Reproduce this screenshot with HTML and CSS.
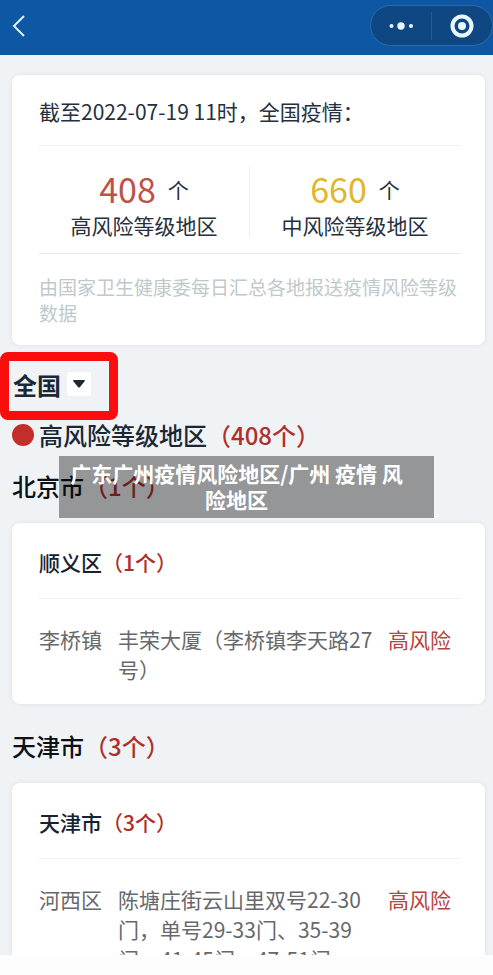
FILE: index.html
```html
<!DOCTYPE html>
<html lang="zh-CN">

<head>
    <meta charset="utf-8">
    <meta name="viewport" content="width=device-width, initial-scale=1.0">
    <title>疫情风险等级查询</title>
    <link rel="stylesheet" href="styles.css">
</head>

<body>

    <header class="topbar">
        <button class="back" aria-label="返回">
            <svg width="14" height="24" viewBox="0 0 14 24"><path d="M12 2 L2 12 L12 22" /></svg>
        </button>
        <div class="capsule">
            <button aria-label="更多">
                <svg width="24" height="10" viewBox="0 0 24 10">
                    <circle cx="2.500" cy="5" r="2" />
                    <circle cx="12" cy="5" r="3.700" />
                    <circle cx="22" cy="5" r="2" />
                </svg>
            </button>
            <button aria-label="关闭">
                <svg width="24" height="24" viewBox="0 0 24 24">
                    <circle class="ring" cx="12" cy="12" r="9.500" />
                    <circle cx="12" cy="12" r="4" />
                </svg>
            </button>
        </div>
    </header>

    <main>
        <section class="card">
            <h1 class="date">截至2022-07-19 11时，全国疫情：</h1>
            <div class="stats">
                <div class="stat">
                    <p class="count"><b class="high">408</b>个</p>
                    <p>高风险等级地区</p>
                </div>
                <div class="stat">
                    <p class="count"><b class="middle">660</b>个</p>
                    <p>中风险等级地区</p>
                </div>
            </div>
            <p class="note">由国家卫生健康委每日汇总各地报送疫情风险等级数据</p>
        </section>

        <div class="filter">
            <select class="region" aria-label="地区">
                <option>全国</option>
                <option>北京市</option>
                <option>天津市</option>
            </select>
            <span class="arrow">
                <svg width="12" height="8" viewBox="0 0 12 8"><path d="M1 0 H11 Q12.500 0 11.500 1.500 L7 7 Q6 8 5 7 L0.500 1.500 Q-0.500 0 1 0 Z" /></svg>
            </span>
        </div>

        <h2 class="level"><span class="dot"></span><span>高风险等级地区<span class="num">（408个）</span></span></h2>

        <section class="city">
            <h2 class="city-name">北京市<span class="num">（1个）</span></h2>
            <p class="caption">广东广州疫情风险地区/广州 疫情 风险地区</p>
            <div class="card">
                <h3 class="district">顺义区<span class="num">（1个）</span></h3>
                <table class="places">
                    <tr>
                        <th scope="row">李桥镇</th>
                        <td>丰荣大厦（李桥镇李天路27号）</td>
                        <td class="risk">高风险</td>
                    </tr>
                </table>
            </div>
        </section>

        <section class="city">
            <h2 class="city-name">天津市<span class="num">（3个）</span></h2>
            <div class="card">
                <h3 class="district">天津市<span class="num">（3个）</span></h3>
                <table class="places">
                    <tr>
                        <th scope="row">河西区</th>
                        <td>陈塘庄街云山里双号22-30门，单号29-33门、35-39门、41-45门、47-51门</td>
                        <td class="risk">高风险</td>
                    </tr>
                </table>
            </div>
        </section>
    </main>

    <footer class="bottom"></footer>

</body>

</html>
```
FILE: styles.css
```css
* {
    box-sizing: border-box;
}

body {
    margin: 0;
    height: 100vh;
    display: flex;
    flex-direction: column;
    overflow: hidden;
    background-color: #eff3f6;
    color: #25303c;
    font-family: "Noto Sans CJK SC", sans-serif;
    font-size: 21px;
}

h1,
h2,
h3,
p {
    margin: 0;
}

button {
    border: 0;
    padding: 0;
    background: none;
    cursor: pointer;
}

svg {
    display: block;
}

/* top */

.topbar {
    flex: none;
    display: flex;
    align-items: center;
    justify-content: space-between;
    height: 55px;
    padding: 0 0 4px 12px;
    background-color: #0d57a5;
}

.back path {
    fill: none;
    stroke: #dff2ff;
    stroke-width: 2;
}

.capsule {
    display: flex;
    align-items: center;
    width: 123px;
    height: 41px;
    border: 1px solid #2f6bab;
    border-radius: 21px;
    background-color: #0e4782;
}

.capsule button {
    flex: 1;
    display: flex;
    justify-content: center;
    align-items: center;
    height: 28px;
}

.capsule button + button {
    border-left: 1px solid #265a92;
}

.capsule svg {
    fill: #e9f8ff;
}

.capsule .ring {
    fill: none;
    stroke: #e9f8ff;
    stroke-width: 4;
}

main {
    flex: 1;
    min-height: 0;
    overflow: hidden;
    padding-top: 20px;
}

.card {
    margin: 0 8px 27px 12px;
    padding: 0 25px 0 27px;
    background-color: #fff;
    border-radius: 8px;
    box-shadow: 0 0 4px rgba(60, 70, 80, 0.1);
}

main > .card {
    margin-bottom: 7px;
}

.date {
    padding: 20px 0 18px;
    border-bottom: 1px solid #eff0f1;
    font-size: 21px;
    font-weight: 400;
    line-height: 32px;
}

.stats {
    display: flex;
    padding: 20px 0 15px;
    border-bottom: 1px solid #e6e8ea;
}

.stat {
    flex: 1;
    text-align: center;
    line-height: 26px;
}

.stat + .stat {
    border-left: 1px solid #eceef0;
}

.count {
    display: flex;
    justify-content: center;
    align-items: center;
    gap: 12px;
    height: 46px;
}

.count b {
    font-size: 34px;
    font-weight: 400;
}

.high {
    color: #bd5148;
}

.middle {
    color: #dfb62c;
}

.note {
    padding: 20px 0 19px;
    color: #c0c8cc;
    font-size: 19px;
    line-height: 26px;
}

/* region picker */

.filter {
    display: flex;
    align-items: center;
    width: 118px;
    height: 68px;
    padding: 0 0 4px 4px;
    border: 9px solid #f90d0d;
    border-radius: 8px;
}

.region {
    width: 78px;
    padding: 0;
    border: 0;
    appearance: none;
    background: none;
    color: #1b2733;
    font-family: inherit;
    font-size: 24px;
    font-weight: 700;
}

.arrow {
    display: flex;
    justify-content: center;
    align-items: center;
    width: 24px;
    height: 24px;
    margin-left: -24px;
    background-color: #fff;
    border-radius: 3px;
    pointer-events: none;
}

.arrow path {
    fill: #1b2733;
}

.level {
    display: flex;
    align-items: center;
    gap: 5px;
    margin: 3px 12px 0;
    color: #1b2733;
    font-size: 24px;
    font-weight: 500;
    line-height: 24px;
}

.dot {
    width: 22px;
    height: 22px;
    border-radius: 50%;
    background-color: #c22f2b;
}

.num {
    color: #b02f2a;
}

/* cities */

.city {
    position: relative;
}

.city-name {
    margin: 24px 12px 22px;
    color: #0c1116;
    font-size: 24px;
    font-weight: 500;
    line-height: 30px;
}

.caption {
    position: absolute;
    top: -15px;
    left: 12%;
    width: 76%;
    padding: 4px 23px 6px 3px;
    background-color: rgba(0, 0, 0, 0.38);
    color: #fff;
    font-weight: 700;
    line-height: 26px;
    text-align: center;
}

.district {
    padding: 23px 0 20px;
    border-bottom: 1px solid #eff0f1;
    color: #152231;
    font-size: 21px;
    font-weight: 500;
    line-height: 32px;
}

.places {
    width: 100%;
    table-layout: fixed;
    border-collapse: collapse;
    color: #66696c;
    line-height: 30px;
}

.places th,
.places td {
    padding: 25px 8px 20px 0;
    font-weight: 400;
    text-align: left;
    vertical-align: top;
}

.places th {
    width: 79px;
}

.places .risk {
    width: 72px;
    color: #b5453e;
}

.bottom {
    flex: none;
    height: 20px;
    background-color: #fdfdfd;
}
```
